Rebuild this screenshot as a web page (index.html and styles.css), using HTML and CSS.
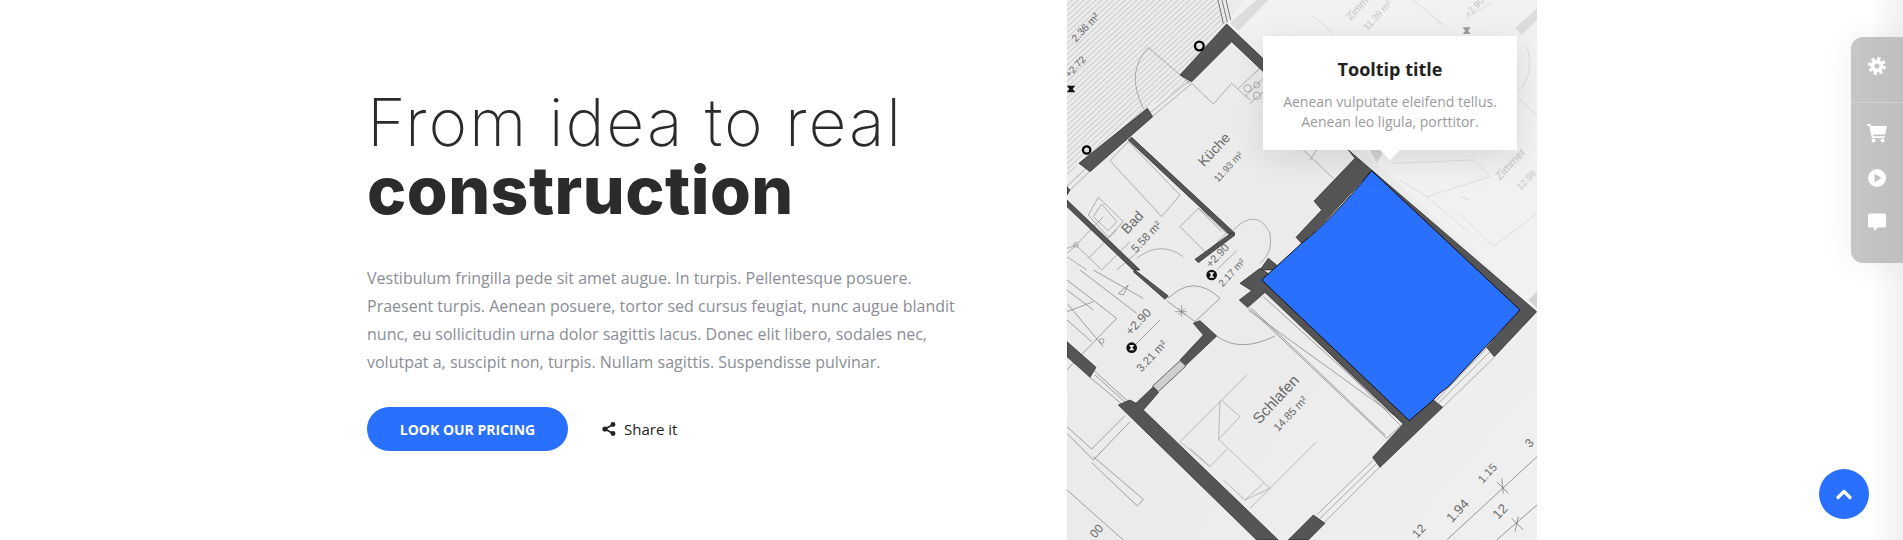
FILE: index.html
```html
<!DOCTYPE html>
<html lang="en">
<head>
<meta charset="utf-8">
<title>From idea to real construction</title>
<link rel="stylesheet" href="styles.css">
</head>
<body>
<main class="hero">
  <section class="intro">
    <h1 class="headline"><span class="headline-light">From idea to real</span><strong class="headline-bold">construction</strong></h1>
    <p class="lead">Vestibulum fringilla pede sit amet augue. In turpis. Pellentesque posuere. Praesent turpis. Aenean posuere, tortor sed cursus feugiat, nunc augue blandit nunc, eu sollicitudin urna dolor sagittis lacus. Donec elit libero, sodales nec, volutpat a, suscipit non, turpis. Nullam sagittis. Suspendisse pulvinar.</p>
    <div class="actions">
      <a class="btn" href="#">LOOK OUR PRICING</a>
      <a class="share" href="#">
        <svg class="share-icon" viewBox="0 0 14 14"><path d="M11 2.5 3 7l8 4.500" fill="none" stroke="#222" stroke-width="1.600"/><circle cx="11" cy="2.500" r="2.400" fill="#222"/><circle cx="3" cy="7" r="2.600" fill="#222"/><circle cx="11" cy="11.500" r="2.400" fill="#222"/></svg>
        <span>Share it</span>
      </a>
    </div>
  </section>

  <figure class="plan">
    <svg class="plan-art" viewBox="21 0 1410 1620" preserveAspectRatio="none">
      <defs>
        <pattern id="hatch" width="12" height="12" patternUnits="userSpaceOnUse" patternTransform="rotate(-43)">
          <rect width="12" height="12" fill="#ececec"/>
          <rect width="12" height="2.500" fill="#c6c6c6"/>
        </pattern>
        <linearGradient id="paper" x1="0" y1="0" x2="1" y2="1">
          <stop offset="0" stop-color="#ececec"/>
          <stop offset=".5" stop-color="#ebebeb"/>
          <stop offset="1" stop-color="#f0f0f0"/>
        </linearGradient>
      </defs>
      <rect x="21" y="0" width="1410" height="1620" fill="url(#paper)"/>
      <!-- upper-right lighter room -->
      <polygon points="500,72 550,0 1431,0 1431,935" fill="#f1f1f1"/>
      <polygon points="510,70 590,0 625,0 535,92" fill="#dcdcdc"/>
      <polygon points="1365,85 1431,25 1431,60 1385,105" fill="#dcdcdc"/>
      <polygon points="930,450 975,450 950,488" fill="#d4d4d4"/>
      <polygon points="1405,900 1431,875 1431,925" fill="#d4d4d4"/>
      <!-- balcony hatch -->
      <polygon points="21,0 478,0 500,72 360,225 395,245 262,325 57,490 21,530" fill="url(#hatch)"/>
      <path d="M474,0 490,70M486,0 502,66M498,0 512,60" fill="none" stroke="#777" stroke-width="3"/>

      <!-- faint drawing, upper right -->
      <g fill="none" stroke="#d2d2d2" stroke-width="2">
        <path d="M760,50 820,100M1060,0 1150,75M1150,75 1130,60M1220,55 1300,5M1400,140Q1430,230 1360,290M1370,290 1431,345M1000,490 1240,480 1290,530 1100,590 1020,540M1100,590 1230,700M1230,600 1200,590M1200,640 1300,740 1431,640"/>
      </g>
      <g fill="#c6c6c6" font-family="Liberation Sans, sans-serif" font-size="32">
        <text transform="translate(872 62) rotate(-47)">Zimmer</text>
        <text transform="translate(922 92) rotate(-47)" font-size="28">11.39 m²</text>
        <text transform="translate(1225 55) rotate(-47)" font-size="28">+2.90</text>
        <text transform="translate(1320 542) rotate(-47)" font-size="34">Zimmer</text>
        <text transform="translate(1382 572) rotate(-47)" font-size="28">12.98</text>
      </g>

      <!-- thin drawing -->
      <g fill="none" stroke="#8d8d8d" stroke-width="2">
        <path d="M265,143 390,250M265,143Q195,215 250,325M268,340 390,240M276,350 396,250M20,560 78,505M20,580 88,515"/>
        <path d="M395,250 460,312 515,250 570,300M535,265 610,195M555,290 610,235M570,310 610,275"/>
        <circle cx="563" cy="265" r="11"/><circle cx="591" cy="287" r="11"/><circle cx="590" cy="255" r="9"/>
        <path d="M150,482 205,425 360,585 305,650ZM510,688 440,760 360,680 415,625ZM415,625 485,695M435,640 500,700"/>
        <path d="M85,645 115,592 190,665 145,712 85,645ZM100,650 125,612 170,665 145,692ZM730,450 820,535M750,480 770,450"/>
        <path d="M520,690Q590,620 630,700Q640,760 600,790M230,775Q300,720 370,770M470,810 530,752"/>
        <!-- stairs -->
        <path d="M21,745 48,735M48,735 125,810M21,770 80,810M48,735 21,760M48,735 130,650M85,775 170,690M125,810 210,725M170,810 240,750"/>
        <circle cx="48" cy="735" r="7"/>
      </g>
      <g fill="none" stroke="#777" stroke-width="2" transform="translate(0 810)">
        <path d="M21,30 170,145 20,300M60,0 230,130M100,0 250,85M21,60 100,120M21,100 130,230M21,150 95,215M21,125 100,95M175,70 205,45 190,75ZM118,213a7,7 0 1 0 14,0a7,7 0 1 0 -14,0"/>
        <path d="M325,85Q400,10 480,85M480,85 405,155M320,92 405,155M345,125h35M365,105v35M355,115 375,135M355,135 375,115"/>
        <path d="M470,198Q540,250 645,198M215,235 300,150"/>
        <path d="M100,300 205,395M90,322 195,410M105,315 205,405"/>
        <path d="M21,470 95,537 195,437M21,490 100,570 210,455M100,560 250,688 232,708 95,578M21,660 190,810"/>
        <path d="M565,112 615,68 1030,460 980,505ZM575,115 975,495M610,80 1035,465M630,70 1025,470M565,120 1015,445"/>
        <path d="M360,515 560,315M360,515 450,590 500,538M390,535 450,590M486,392 540,440 476,508 480,392M476,508 630,655 555,690 490,630M555,690 610,640M570,715 770,515" stroke="#a0a0a0"/>
        <path d="M770,735 940,570M780,745 950,580M795,755 960,590M1125,395 1280,235M1135,400 1290,245M1148,412 1303,262" stroke="#888"/>
      </g>
      <g fill="none" stroke="#666" stroke-width="2" transform="translate(0 810)">
        <path d="M1160,810 1431,560M1310,810 1431,705M1310,635 1345,670M1325,625 1330,670M1355,745 1390,780M1375,740 1365,785"/>
      </g>

      <!-- heavy walls -->
      <g fill="#555" stroke="#222" stroke-width="2">
        <polygon points="500,72 640,205 610,215 515,125 395,245 360,225"/>
        <polygon points="262,325 278,350 90,515 57,490"/>
        <polygon points="21,560 21,585 30,570"/>
        <polygon points="215,412 525,700 515,710 205,420"/>
        <polygon points="21,600 240,810 220,810 21,620"/>
        <polygon points="600,810 625,775 650,795 640,810"/>
        <polygon points="405,778 515,698 525,705 415,788"/>
        <polygon points="865,450 1430,935 1303,1070 1280,1042 1380,930 935,512 790,670 725,730 708,712 785,630 762,603 885,475"/>
      </g>
      <g fill="#555" stroke="#222" stroke-width="2" transform="translate(0 810)">
        <polygon points="225,0 325,78 315,88 220,5"/>
        <polygon points="600,-5 640,20 605,30 1048,452 1120,390 1148,412 960,592 938,562 1030,462 615,66 562,112 538,90 575,62 540,40"/>
        <polygon points="21,215 108,292 90,322 21,260"/>
        <polygon points="175,405 210,390 228,400 280,350 295,368 250,420 655,810 590,810"/>
        <polygon points="400,160 420,152 470,198 378,285 360,270 430,195"/>
        <polygon points="685,810 760,735 795,760 745,810"/>
        <polygon points="278,348 360,272 378,288 295,365" fill="#cfcfcf"/>
      </g>

      <!-- marked room -->
      <path d="M935,512 1380,930 1165,1160Q1135,1180 1120,1200L1048,1262 605,840 725,730Q810,665 935,512Z" fill="#2970ff" stroke="#111" stroke-width="3"/>

      <!-- markers -->
      <g fill="none" stroke="#000" stroke-width="7">
        <circle cx="418" cy="138" r="13"/>
        <circle cx="80" cy="450" r="11"/>
      </g>
      <g fill="#111">
        <path d="M20,257h26l-8,10 8,10H20l8,-10z"/>
        <circle cx="215" cy="1043" r="16"/><circle cx="455" cy="825" r="16"/>
      </g>
      <path d="M207,1035h16l-6,8 6,8h-16l6,-8zM447,817h16l-6,8 6,8h-16l6,-8z" fill="#eee"/>
      <path d="M1208,82h24l-8,10 8,10h-24l8,-10z" fill="#999"/>

      <!-- labels -->
      <g fill="#6a6a6a" font-family="Liberation Sans, sans-serif" font-size="30">
        <text transform="translate(48 128) rotate(-47)" font-size="31">2.36 m²</text>
        <text transform="translate(28 235) rotate(-47)" font-size="30">+2.72</text>
        <text transform="translate(432 502) rotate(-47)" font-size="42">Küche</text>
        <text transform="translate(474 548) rotate(-47)" font-size="29">11.93 m²</text>
        <text transform="translate(202 704) rotate(-47)" font-size="42">Bad</text>
        <text transform="translate(228 760) rotate(-47)" font-size="34">5.58 m²</text>
        <text transform="translate(452 805) rotate(-47)" font-size="33">+2.90</text>
        <text transform="translate(488 862) rotate(-47)" font-size="30">2.17 m²</text>
        <text transform="translate(212 1008) rotate(-47)" font-size="37">+2.90</text>
        <text transform="translate(244 1118) rotate(-47)" font-size="34">3.21 m²</text>
        <text transform="translate(598 1274) rotate(-47)" font-size="46">Schlafen</text>
        <text transform="translate(655 1296) rotate(-47)" font-size="33">14.85 m²</text>
        <text transform="translate(1176 1570) rotate(-47)" font-size="40">1.94</text>
        <text transform="translate(1268 1452) rotate(-47)" font-size="34">1.15</text>
        <text transform="translate(1315 1560) rotate(-47)" font-size="40">12</text>
        <text transform="translate(1410 1345) rotate(-47)" font-size="36">3</text>
        <text transform="translate(1072 1616) rotate(-47)" font-size="36">12</text>
        <text transform="translate(105 1616) rotate(-47)" font-size="36">00</text>
      </g>
    </svg>
    <figcaption class="tooltip">
      <strong class="tooltip-title">Tooltip title</strong>
      <span class="tooltip-text">Aenean vulputate eleifend tellus. Aenean leo ligula, porttitor.</span>
    </figcaption>
  </figure>
</main>

<aside class="edge-shade"></aside>

<nav class="dock">
  <div class="dock-top">
    <svg class="dock-icon dock-icon-small" viewBox="0 0 20 20"><circle cx="10" cy="10" r="8.200" fill="none" stroke="#fff" stroke-width="3.400" stroke-dasharray="3.600 2.840"/><path fill="#fff" fill-rule="evenodd" d="M10 3a7 7 0 1 1 0 14 7 7 0 0 1 0-14zm0 4.200a2.800 2.800 0 1 0 0 5.600 2.800 2.800 0 0 0 0-5.600z"/></svg>
  </div>
  <div class="dock-list">
    <svg class="dock-icon" viewBox="0 0 20 20"><path fill="#fff" d="M0 1h3.600l.5 2H20l-1.800 8.400H6l.4 1.800h11.200v1.800H4.800L2.300 2.800H0z"/><circle cx="6.500" cy="17.500" r="1.900" fill="#fff"/><circle cx="15.500" cy="17.500" r="1.900" fill="#fff"/></svg>
    <svg class="dock-icon" viewBox="0 0 20 20"><path fill="#fff" fill-rule="evenodd" d="M10 1a9 9 0 1 1 0 18 9 9 0 0 1 0-18zM7.500 5.500v9l7-4.500z"/></svg>
    <svg class="dock-icon" viewBox="0 0 20 20"><path fill="#fff" d="M2.500 1.500h15a1.500 1.500 0 0 1 1.500 1.500v11a1.500 1.500 0 0 1-1.500 1.500H11l-4 3.500v-3.500H2.500A1.500 1.500 0 0 1 1 14V3a1.500 1.500 0 0 1 1.500-1.500z"/></svg>
  </div>
</nav>

<a class="to-top" href="#">
  <svg class="to-top-icon" viewBox="0 0 16 12"><path d="M2 9.500 8 3.500l6 6" fill="none" stroke="#fff" stroke-width="3.200" stroke-linecap="round" stroke-linejoin="round"/></svg>
</a>
</body>
</html>
```

FILE: styles.css
```css
* { box-sizing: border-box; }

html, body {
  margin: 0;
  height: 540px;
  overflow: hidden;
  background: #fff;
}

body {
  position: relative;
  font-family: "Open Sans", sans-serif;
}

.hero {
  display: flex;
  height: 540px;
}

.intro {
  width: 1067px;
  padding: 88px 110px 0 367px;
}

.headline {
  margin: 0 0 40px;
  font-family: Inter, sans-serif;
  font-size: 66px;
  line-height: 68px;
  color: #2b2b2b;
}

.headline-light {
  display: block;
  font-weight: 200;
  letter-spacing: 1.9px;
}

.headline-bold {
  display: block;
  font-weight: 800;
  letter-spacing: 0.5px;
}

.lead {
  margin: 0 0 31px;
  font-size: 16px;
  line-height: 28px;
  color: #8a8d96;
}

.actions {
  display: flex;
  align-items: center;
  gap: 34px;
}

.btn {
  display: flex;
  align-items: center;
  justify-content: center;
  width: 201px;
  height: 44px;
  border-radius: 22px;
  background: #2970ff;
  color: #fff;
  font-size: 14px;
  font-weight: 700;
  text-decoration: none;
}

.share {
  display: flex;
  align-items: center;
  gap: 8px;
  font-size: 15px;
  line-height: 20px;
  color: #222;
  text-decoration: none;
}

.share-icon {
  width: 14px;
  height: 14px;
}

.plan {
  position: relative;
  width: 470px;
  height: 540px;
  margin: 0;
}

.plan-art {
  display: block;
  width: 470px;
  height: 540px;
}

.tooltip {
  position: absolute;
  left: 196px;
  top: 36px;
  width: 254px;
  height: 114px;
  padding: 20px 18px 0;
  background: #fff;
  box-shadow: 0 8px 30px rgba(0, 0, 0, 0.1);
  text-align: center;
}

.tooltip::after {
  content: "";
  position: absolute;
  left: 117px;
  bottom: -10px;
  border-left: 10px solid transparent;
  border-right: 10px solid transparent;
  border-top: 10px solid #fff;
}

.tooltip-title {
  display: block;
  margin-bottom: 10px;
  font-size: 18px;
  line-height: 26px;
  font-weight: 700;
  color: #222;
}

.tooltip-text {
  display: block;
  font-size: 14px;
  line-height: 20px;
  color: #9b9b9b;
}

.edge-shade {
  position: absolute;
  top: 0;
  right: 0;
  width: 32px;
  height: 540px;
  background: linear-gradient(to right, rgba(0, 0, 0, 0), rgba(0, 0, 0, 0.06));
}

.dock {
  position: absolute;
  top: 37px;
  right: 0;
  width: 52px;
  height: 226px;
  border-radius: 12px 0 0 12px;
  background: linear-gradient(to right, #c6c6c6, #bfbfbf);
  box-shadow: 0 0 30px rgba(0, 0, 0, 0.07);
}

.dock-top {
  display: flex;
  justify-content: center;
  align-items: center;
  height: 66px;
  padding-bottom: 8px;
  border-bottom: 1px solid #d2d2d2;
}

.dock-list {
  display: flex;
  flex-direction: column;
  align-items: center;
  gap: 24.5px;
  padding-top: 20px;
}

.dock-icon {
  display: block;
  width: 20px;
  height: 20px;
}

.dock-icon-small {
  width: 18px;
  height: 18px;
}

.to-top {
  position: absolute;
  left: 1819px;
  top: 469px;
  display: flex;
  align-items: center;
  justify-content: center;
  width: 50px;
  height: 50px;
  border-radius: 50%;
  background: #2970ff;
}

.to-top-icon {
  width: 16px;
  height: 12px;
}
```
